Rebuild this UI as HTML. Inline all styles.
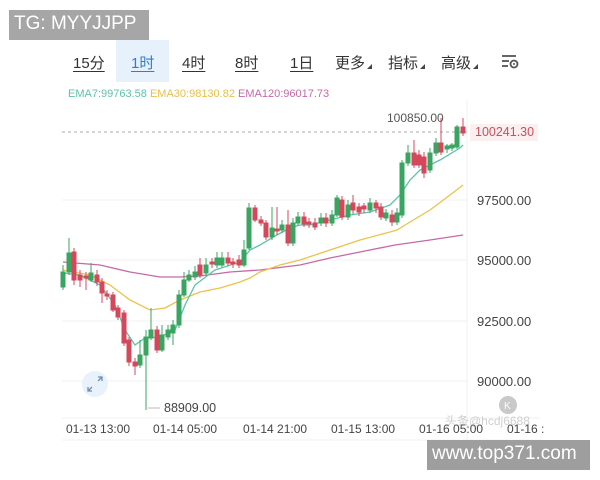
<!DOCTYPE html>
<html><head><meta charset="utf-8"><style>
body{margin:0;width:600px;height:480px;background:#fff;position:relative;overflow:hidden;font-family:"Liberation Sans","Noto Sans CJK SC",sans-serif}
.a{position:absolute;white-space:nowrap}
.tab{position:absolute;top:52px;font-size:15px;color:#333;text-decoration:underline;text-underline-offset:3px}
.tri{display:inline-block;width:0;height:0;border-left:5px solid transparent;border-bottom:5px solid #444;margin-left:2px;vertical-align:-1px}
.ax{position:absolute;left:477px;font-size:13px;color:#444}
.dt{position:absolute;top:422px;font-size:12px;color:#444}
</style></head><body>
<div class="a" style="left:9px;top:10px;width:140px;height:30px;background:#a6a6a6"></div>
<div class="a" style="left:14px;top:13px;font-size:19px;color:#fff">TG: MYYJJPP</div>
<div class="a" style="left:116px;top:40px;width:53px;height:42px;background:#e7f1fc"></div>
<div class="tab" style="left:73px">15分</div>
<div class="tab" style="left:131px;color:#2f7fd0">1时</div>
<div class="tab" style="left:182px">4时</div>
<div class="tab" style="left:235px">8时</div>
<div class="tab" style="left:290px">1日</div>
<div class="tab" style="left:335px;text-decoration:none">更多<span class="tri"></span></div>
<div class="tab" style="left:388px;text-decoration:none">指标<span class="tri"></span></div>
<div class="tab" style="left:441px;text-decoration:none">高级<span class="tri"></span></div>
<svg class="a" style="left:500px;top:52px" width="22" height="18"><g stroke="#555" stroke-width="1.8" fill="none"><line x1="2" y1="4" x2="16" y2="4"/><line x1="2" y1="9" x2="9" y2="9"/><line x1="2" y1="14" x2="8" y2="14"/><circle cx="14" cy="12" r="3.5"/></g><circle cx="14" cy="12" r="1" fill="#555"/></svg>
<div class="a" style="left:68px;top:88px;font-size:11px"><span style="color:#5cc3a8">EMA7:99763.58</span> <span style="color:#e8c04a">EMA30:98130.82</span> <span style="color:#c46aa8">EMA120:96017.73</span></div>
<svg class="a" style="left:0;top:0" width="600" height="480">
<g stroke="#f1f1f1" stroke-width="1"><line x1="62" y1="200" x2="467" y2="200"/><line x1="62" y1="260" x2="467" y2="260"/><line x1="62" y1="321" x2="467" y2="321"/><line x1="62" y1="381" x2="467" y2="381"/><line x1="467" y1="100" x2="467" y2="440"/><line x1="62" y1="418" x2="540" y2="418"/><line x1="62" y1="440" x2="540" y2="440"/></g>
<line x1="62" y1="132" x2="467" y2="132" stroke="#aaa" stroke-dasharray="3,3"/>
<polyline fill="none" stroke="#c46aa8" stroke-width="1.3" points="63,262 100,265 130,272 160,277 180,277 200,276 230,272 260,270 300,265 330,258 360,252 395,245 430,240 463,235"/>
<polyline fill="none" stroke="#ecc24a" stroke-width="1.3" points="63,270 90,275 110,285 130,300 150,310 165,308 180,300 200,292 220,288 240,282 250,278 260,272 280,265 300,260 330,250 360,240 390,232 397,230 410,222 430,210 450,195 463,185"/>
<polyline fill="none" stroke="#5cc3a8" stroke-width="1.3" points="63,273 80,275 100,285 115,305 125,330 135,345 145,338 160,337 175,330 185,305 195,285 215,270 240,262 250,250 260,245 275,236 290,228 300,225 310,225 330,220 350,215 370,212 390,205 400,195 410,180 420,170 440,160 460,148 463,145"/>
<g stroke-width="1">
<g stroke="#3aa560" fill="#3aa560">
<line x1="63" y1="265" x2="63" y2="290"/><rect x="61" y="272" width="4" height="15"/>
<line x1="69" y1="238" x2="69" y2="275"/><rect x="67" y="253" width="4" height="19"/>
<line x1="91" y1="263" x2="91" y2="282"/><rect x="89" y="273" width="4" height="7"/>
<line x1="140" y1="340" x2="140" y2="368"/><rect x="138" y="355" width="4" height="10"/>
<line x1="146" y1="330" x2="146" y2="410"/><rect x="144" y="337" width="4" height="18"/>
<line x1="151" y1="308" x2="151" y2="340"/><rect x="149" y="330" width="4" height="8"/>
<line x1="162" y1="325" x2="162" y2="352"/><rect x="160" y="335" width="4" height="15"/>
<line x1="168" y1="325" x2="168" y2="340"/><rect x="166" y="330" width="4" height="7"/>
<line x1="173" y1="320" x2="173" y2="345"/><rect x="171" y="325" width="4" height="8"/>
<line x1="179" y1="290" x2="179" y2="328"/><rect x="177" y="295" width="4" height="30"/>
<line x1="184" y1="272" x2="184" y2="297"/><rect x="182" y="280" width="4" height="15"/>
<line x1="189" y1="270" x2="189" y2="282"/><rect x="187" y="275" width="4" height="5"/>
<line x1="195" y1="266" x2="195" y2="280"/><rect x="193" y="272" width="4" height="5"/>
<line x1="206" y1="258" x2="206" y2="276"/><rect x="204" y="265" width="4" height="8"/>
<line x1="217" y1="252" x2="217" y2="268"/><rect x="215" y="258" width="4" height="7"/>
<line x1="222" y1="252" x2="222" y2="267"/><rect x="220" y="258" width="4" height="7"/>
<line x1="244" y1="240" x2="244" y2="267"/><rect x="242" y="250" width="4" height="15"/>
<line x1="249" y1="203" x2="249" y2="250"/><rect x="247" y="208" width="4" height="40"/>
<line x1="272" y1="207" x2="272" y2="240"/><rect x="270" y="228" width="4" height="9"/>
<line x1="282" y1="220" x2="282" y2="233"/><rect x="280" y="225" width="4" height="5"/>
<line x1="293" y1="218" x2="293" y2="246"/><rect x="291" y="223" width="4" height="20"/>
<line x1="298" y1="212" x2="298" y2="226"/><rect x="296" y="217" width="4" height="6"/>
<line x1="321" y1="213" x2="321" y2="226"/><rect x="319" y="218" width="4" height="5"/>
<line x1="332" y1="210" x2="332" y2="226"/><rect x="330" y="215" width="4" height="8"/>
<line x1="337" y1="195" x2="337" y2="217"/><rect x="335" y="198" width="4" height="17"/>
<line x1="348" y1="200" x2="348" y2="220"/><rect x="346" y="205" width="4" height="12"/>
<line x1="370" y1="198" x2="370" y2="213"/><rect x="368" y="203" width="4" height="7"/>
<line x1="386" y1="209" x2="386" y2="221"/><rect x="384" y="213" width="4" height="5"/>
<line x1="397" y1="208" x2="397" y2="225"/><rect x="395" y="213" width="4" height="9"/>
<line x1="402" y1="160" x2="402" y2="218"/><rect x="400" y="163" width="4" height="52"/>
<line x1="408" y1="145" x2="408" y2="166"/><rect x="406" y="153" width="4" height="10"/>
<line x1="430" y1="148" x2="430" y2="173"/><rect x="428" y="153" width="4" height="17"/>
<line x1="436" y1="138" x2="436" y2="156"/><rect x="434" y="143" width="4" height="10"/>
<line x1="447" y1="144" x2="447" y2="153"/><rect x="445" y="146" width="4" height="3"/>
<line x1="452" y1="143" x2="452" y2="151"/><rect x="450" y="145" width="4" height="3"/>
<line x1="457" y1="125" x2="457" y2="149"/><rect x="455" y="127" width="4" height="20"/>
</g>
<g stroke="#d4485c" fill="#d4485c">
<line x1="74" y1="248" x2="74" y2="285"/><rect x="72" y="252" width="4" height="28"/>
<line x1="80" y1="270" x2="80" y2="287"/><rect x="78" y="275" width="4" height="5"/>
<line x1="86" y1="272" x2="86" y2="290"/><rect x="84" y="276" width="4" height="2"/>
<line x1="97" y1="270" x2="97" y2="286"/><rect x="95" y="275" width="4" height="7"/>
<line x1="102" y1="278" x2="102" y2="303"/><rect x="100" y="282" width="4" height="11"/>
<line x1="107" y1="290" x2="107" y2="300"/><rect x="105" y="294" width="4" height="2"/>
<line x1="113" y1="292" x2="113" y2="312"/><rect x="111" y="295" width="4" height="15"/>
<line x1="118" y1="305" x2="118" y2="320"/><rect x="116" y="308" width="4" height="9"/>
<line x1="124" y1="310" x2="124" y2="346"/><rect x="122" y="313" width="4" height="30"/>
<line x1="129" y1="337" x2="129" y2="366"/><rect x="127" y="340" width="4" height="22"/>
<line x1="135" y1="358" x2="135" y2="375"/><rect x="133" y="362" width="4" height="4"/>
<line x1="157" y1="326" x2="157" y2="353"/><rect x="155" y="330" width="4" height="20"/>
<line x1="200" y1="258" x2="200" y2="278"/><rect x="198" y="265" width="4" height="10"/>
<line x1="212" y1="258" x2="212" y2="268"/><rect x="210" y="262" width="4" height="2"/>
<line x1="228" y1="252" x2="228" y2="266"/><rect x="226" y="258" width="4" height="5"/>
<line x1="233" y1="258" x2="233" y2="268"/><rect x="231" y="262" width="4" height="2"/>
<line x1="239" y1="255" x2="239" y2="268"/><rect x="237" y="260" width="4" height="5"/>
<line x1="255" y1="205" x2="255" y2="222"/><rect x="253" y="208" width="4" height="12"/>
<line x1="261" y1="216" x2="261" y2="226"/><rect x="259" y="220" width="4" height="3"/>
<line x1="266" y1="220" x2="266" y2="240"/><rect x="264" y="223" width="4" height="14"/>
<line x1="277" y1="207" x2="277" y2="235"/><rect x="275" y="229" width="4" height="2"/>
<line x1="288" y1="210" x2="288" y2="246"/><rect x="286" y="225" width="4" height="18"/>
<line x1="304" y1="212" x2="304" y2="227"/><rect x="302" y="217" width="4" height="7"/>
<line x1="309" y1="218" x2="309" y2="228"/><rect x="307" y="222" width="4" height="2"/>
<line x1="315" y1="218" x2="315" y2="230"/><rect x="313" y="223" width="4" height="4"/>
<line x1="326" y1="213" x2="326" y2="227"/><rect x="324" y="218" width="4" height="5"/>
<line x1="342" y1="196" x2="342" y2="220"/><rect x="340" y="200" width="4" height="17"/>
<line x1="353" y1="195" x2="353" y2="214"/><rect x="351" y="203" width="4" height="7"/>
<line x1="359" y1="203" x2="359" y2="216"/><rect x="357" y="207" width="4" height="5"/>
<line x1="364" y1="203" x2="364" y2="213"/><rect x="362" y="206" width="4" height="3"/>
<line x1="376" y1="200" x2="376" y2="213"/><rect x="374" y="203" width="4" height="5"/>
<line x1="381" y1="203" x2="381" y2="220"/><rect x="379" y="207" width="4" height="10"/>
<line x1="392" y1="210" x2="392" y2="226"/><rect x="390" y="215" width="4" height="7"/>
<line x1="414" y1="140" x2="414" y2="168"/><rect x="412" y="153" width="4" height="12"/>
<line x1="419" y1="150" x2="419" y2="168"/><rect x="417" y="155" width="4" height="10"/>
<line x1="424" y1="152" x2="424" y2="178"/><rect x="422" y="157" width="4" height="16"/>
<line x1="441" y1="118" x2="441" y2="155"/><rect x="439" y="143" width="4" height="9"/>
<line x1="463" y1="118" x2="463" y2="136"/><rect x="461" y="127" width="4" height="6"/>
</g></g>
<line x1="148" y1="408" x2="160" y2="408" stroke="#bbb"/>
<circle cx="95" cy="384" r="13" fill="#e9f1fa"/>
<g stroke="#6d8fb8" stroke-width="1.3" fill="none"><path d="M92 387 L88 391 M88 387 L88 391 L92 391"/><path d="M98 381 L102 377 M98 377 L102 377 L102 381"/></g>
<circle cx="508" cy="405" r="9" fill="#c9c9c9"/>
<text x="504" y="409" font-size="10" fill="#fff" font-family="Liberation Sans">K</text>
</svg>
<div class="a" style="left:387px;top:111px;font-size:12px;color:#555">100850.00</div>
<div class="a" style="left:470px;top:124px;width:68px;height:17px;background:#fcefef"></div>
<div class="a" style="left:475px;top:125px;font-size:12.5px;color:#c9505c">100241.30</div>
<div class="ax" style="top:193px">97500.00</div>
<div class="ax" style="top:253px">95000.00</div>
<div class="ax" style="top:314px">92500.00</div>
<div class="ax" style="top:374px">90000.00</div>
<div class="a" style="left:164px;top:401px;font-size:12.5px;color:#444">88909.00</div>
<div class="dt" style="left:66px">01-13 13:00</div>
<div class="dt" style="left:153px">01-14 05:00</div>
<div class="dt" style="left:243px">01-14 21:00</div>
<div class="dt" style="left:331px">01-15 13:00</div>
<div class="dt" style="left:419px">01-16 05:00</div>
<div class="dt" style="left:507px">01-16 :</div>
<div class="a" style="left:445px;top:412px;font-size:12px;color:rgba(150,150,150,0.45)">头条@hcdj6688</div>
<div class="a" style="left:427px;top:440px;width:163px;height:30px;background:#9e9e9e"></div>
<div class="a" style="left:432px;top:443px;font-size:19px;color:#fff">www.top371.com</div>
</body></html>
